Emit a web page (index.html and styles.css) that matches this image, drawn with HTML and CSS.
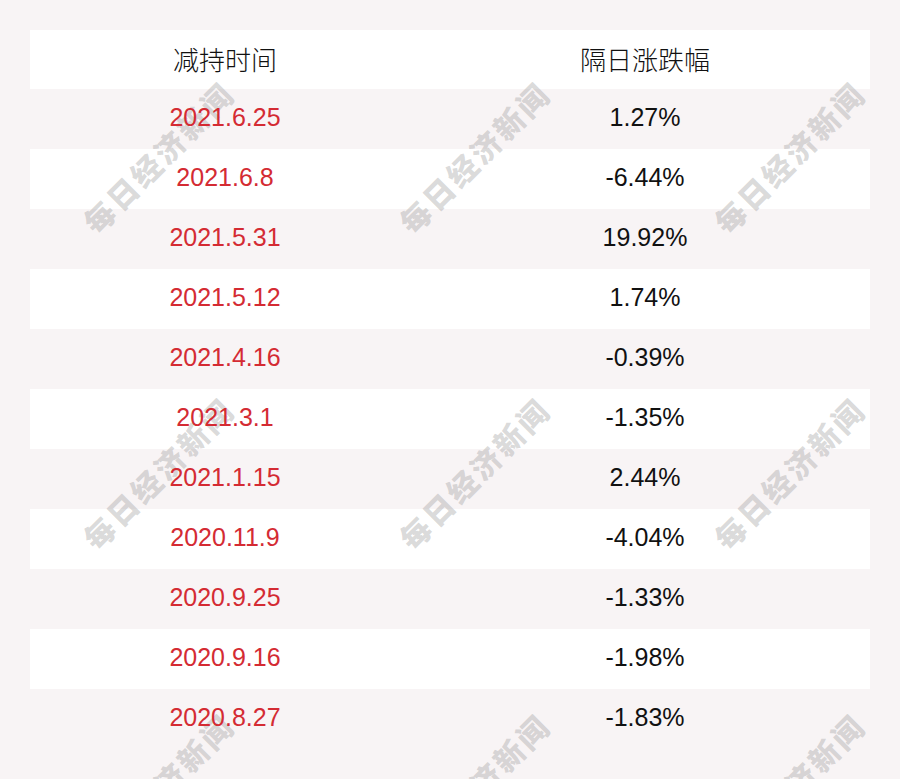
FILE: index.html
```html
<!DOCTYPE html>
<html lang="zh">
<head>
<meta charset="utf-8">
<title>减持时间</title>
<link rel="stylesheet" href="styles.css">
</head>
<body>
<div class="page">
  <div class="table">
    <div class="row head"><div class="c1">减持时间</div><div class="c2">隔日涨跌幅</div></div>
    <div class="row"><div class="c1 date">2021.6.25</div><div class="c2">1.27%</div></div>
    <div class="row"><div class="c1 date">2021.6.8</div><div class="c2">-6.44%</div></div>
    <div class="row"><div class="c1 date">2021.5.31</div><div class="c2">19.92%</div></div>
    <div class="row"><div class="c1 date">2021.5.12</div><div class="c2">1.74%</div></div>
    <div class="row"><div class="c1 date">2021.4.16</div><div class="c2">-0.39%</div></div>
    <div class="row"><div class="c1 date">2021.3.1</div><div class="c2">-1.35%</div></div>
    <div class="row"><div class="c1 date">2021.1.15</div><div class="c2">2.44%</div></div>
    <div class="row"><div class="c1 date">2020.11.9</div><div class="c2">-4.04%</div></div>
    <div class="row"><div class="c1 date">2020.9.25</div><div class="c2">-1.33%</div></div>
    <div class="row"><div class="c1 date">2020.9.16</div><div class="c2">-1.98%</div></div>
    <div class="row"><div class="c1 date">2020.8.27</div><div class="c2">-1.83%</div></div>
  </div>
  <div class="marks">
    <span class="wm wm-a1">每日经济新闻</span>
    <span class="wm wm-a2">每日经济新闻</span>
    <span class="wm wm-a3">每日经济新闻</span>
    <span class="wm wm-b1">每日经济新闻</span>
    <span class="wm wm-b2">每日经济新闻</span>
    <span class="wm wm-b3">每日经济新闻</span>
    <span class="wm wm-c1">每日经济新闻</span>
    <span class="wm wm-c2">每日经济新闻</span>
    <span class="wm wm-c3">每日经济新闻</span>
  </div>
</div>
</body>
</html>
```
FILE: styles.css
```css
html, body {
  margin: 0;
  padding: 0;
  background: #f8f4f5;
}
.page {
  position: relative;
  width: 900px;
  height: 779px;
  overflow: hidden;
  padding: 30px;
  box-sizing: border-box;
}
.table {
  display: flex;
  flex-direction: column;
}
.row {
  display: grid;
  grid-template-columns: 390px 450px;
  height: 60px;
  align-items: start;
  font-family: "Liberation Sans", Arial, "Noto Sans CJK SC", sans-serif;
  font-size: 25px;
  color: #111;
}
.row:nth-child(odd) {
  background: #ffffff;
}
.row > div {
  position: relative;
  z-index: 2;
  text-align: center;
  line-height: 57px;
}
.head {
  height: 59px;
  font-family: "Noto Sans CJK SC", sans-serif;
  font-size: 26px;
  font-weight: 300;
}
.head > div {
  line-height: 58px;
}
.date {
  color: #d42b33;
}
.marks {
  position: absolute;
  inset: 0;
  z-index: 1;
  pointer-events: none;
}
.wm {
  position: absolute;
  width: 240px;
  margin-left: -120px;
  margin-top: -20px;
  text-align: center;
  line-height: 40px;
  font-family: "Noto Sans CJK SC", sans-serif;
  font-weight: 900;
  font-size: 30px;
  letter-spacing: 3px;
  color: rgba(160, 160, 160, 0.4);
  transform: rotate(-45deg);
  white-space: nowrap;
}
.wm-a1 { left: 158px; top: 157px; }
.wm-a2 { left: 474px; top: 157px; }
.wm-a3 { left: 789px; top: 157px; }
.wm-b1 { left: 158px; top: 473px; }
.wm-b2 { left: 474px; top: 473px; }
.wm-b3 { left: 789px; top: 473px; }
.wm-c1 { left: 158px; top: 789px; }
.wm-c2 { left: 474px; top: 789px; }
.wm-c3 { left: 789px; top: 789px; }
```
